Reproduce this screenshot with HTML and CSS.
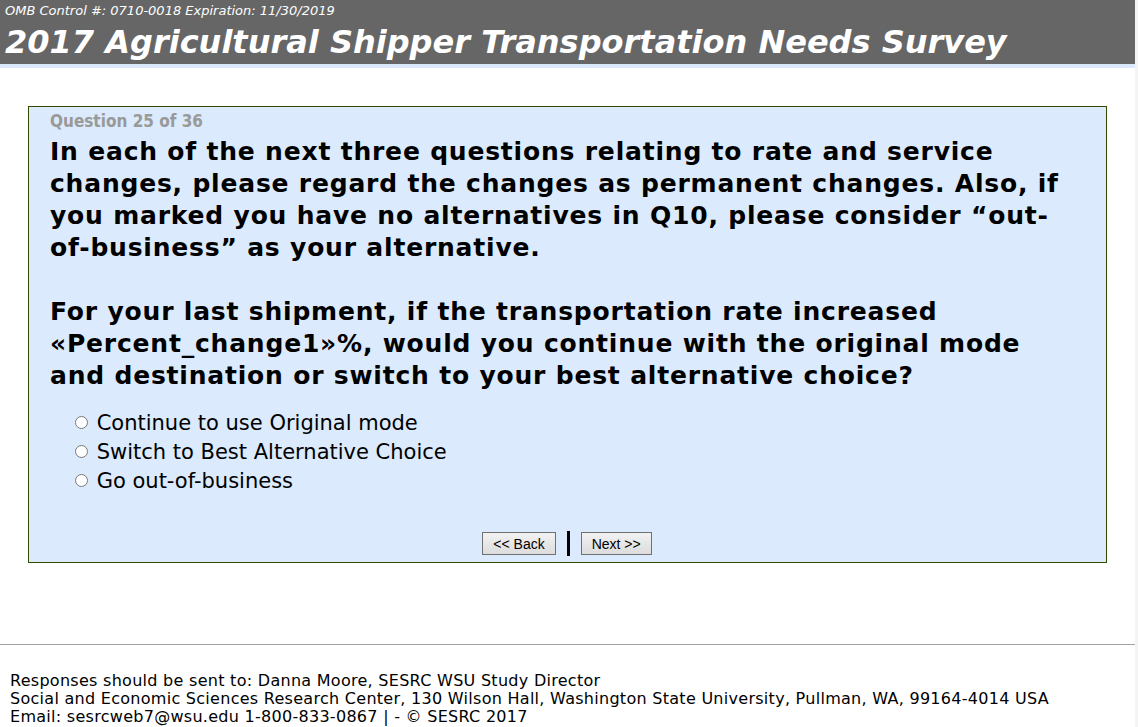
FILE: index.html
```html
<!DOCTYPE html>
<html lang="en">
<head>
  <meta charset="UTF-8" />
  <title>2017 Agricultural Shipper Transportation Needs Survey</title>
  <link rel="stylesheet" href="styles.css">
</head>
<body>
  <div class="header">
    <div class="omb">OMB Control #: 0710-0018 Expiration: 11/30/2019</div>
    <h1>2017 Agricultural Shipper Transportation Needs Survey</h1>
  </div>
  <div class="strip"></div>

  <form class="question-box">
    <div class="counter">Question 25 of 36</div>
    <p class="question">In each of the next three questions relating to rate and service changes, please regard the changes as permanent changes. Also, if you marked you have no alternatives in Q10, please consider “out-of-business” as your alternative.</p>
    <p class="question">For your last shipment, if the transportation rate increased «Percent_change1»%, would you continue with the original mode and destination or switch to your best alternative choice?</p>

    <ul class="options">
      <li><label><input type="radio" name="q25" value="1"> Continue to use Original mode</label></li>
      <li><label><input type="radio" name="q25" value="2"> Switch to Best Alternative Choice</label></li>
      <li><label><input type="radio" name="q25" value="3"> Go out-of-business</label></li>
    </ul>

    <div class="nav">
      <button type="button" class="nav-btn">&lt;&lt; Back</button>
      <span class="divider"></span>
      <button type="button" class="nav-btn">Next &gt;&gt;</button>
    </div>
  </form>

  <hr class="rule">
  <div class="footer">
    Responses should be sent to: Danna Moore, SESRC WSU Study Director<br>
    Social and Economic Sciences Research Center, 130 Wilson Hall, Washington State University, Pullman, WA, 99164-4014 USA<br>
    Email: sesrcweb7@wsu.edu 1-800-833-0867 | - © SESRC 2017
  </div>
</body>
</html>
```

FILE: styles.css
```css
html {
  background: #f4f4f4;
}
body {
  margin: 0 3px 0 0;
  background: white;
  font-family: 'DejaVu Sans', Verdana, sans-serif;
  color: #000;
  min-height: 727px;
}
.header {
  background: #666666;
  color: white;
  padding: 3px 5px 0;
  height: 61px;
}
.omb {
  font-size: 13px;
  font-style: italic;
  line-height: 15px;
}
h1 {
  margin: 0;
  font-size: 32px;
  font-style: italic;
  font-weight: bold;
  line-height: 48px;
  white-space: nowrap;
}
.strip {
  height: 4px;
  background: #dbe9fa;
}
.question-box {
  margin: 38px 28px 0;
  border: 1px solid #334a00;
  background: #dbeafc;
  padding: 5px 22px 6px 21px;
}
.counter {
  font-family: 'DejaVu Sans Condensed', Tahoma, sans-serif;
  font-weight: bold;
  font-size: 17px;
  color: #999;
  line-height: 19px;
}
.question {
  margin: 5px 0 0;
  font-size: 25px;
  font-weight: bold;
  line-height: 32px;
  letter-spacing: 0.8px;
}
.question + .question {
  margin-top: 32px;
}
.options {
  list-style: none;
  margin: 17px 0 0;
  padding: 0 0 0 20px;
}
.options li {
  font-size: 21px;
  line-height: 29px;
}
.options input {
  width: 13px;
  height: 13px;
  margin: 0 2px 0 5px;
  vertical-align: 1px;
}
.nav {
  display: flex;
  justify-content: center;
  align-items: center;
  gap: 11px;
  margin-top: 35px;
}
.nav-btn {
  font-family: 'Liberation Sans', Arial, sans-serif;
  font-size: 14px;
  height: 23px;
  padding: 0 10px;
  border: 1px solid #707070;
  background: linear-gradient(#f2f2f2, #dcdcdc);
  color: #000;
}
.divider {
  width: 3px;
  height: 25px;
  background: #000;
}
.rule {
  margin: 81px 0 0;
  border: 0;
  border-top: 1px solid #a0a0a0;
}
.footer {
  font-size: 16px;
  line-height: 18px;
  letter-spacing: 0.28px;
  padding: 27px 10px 0;
}
```
